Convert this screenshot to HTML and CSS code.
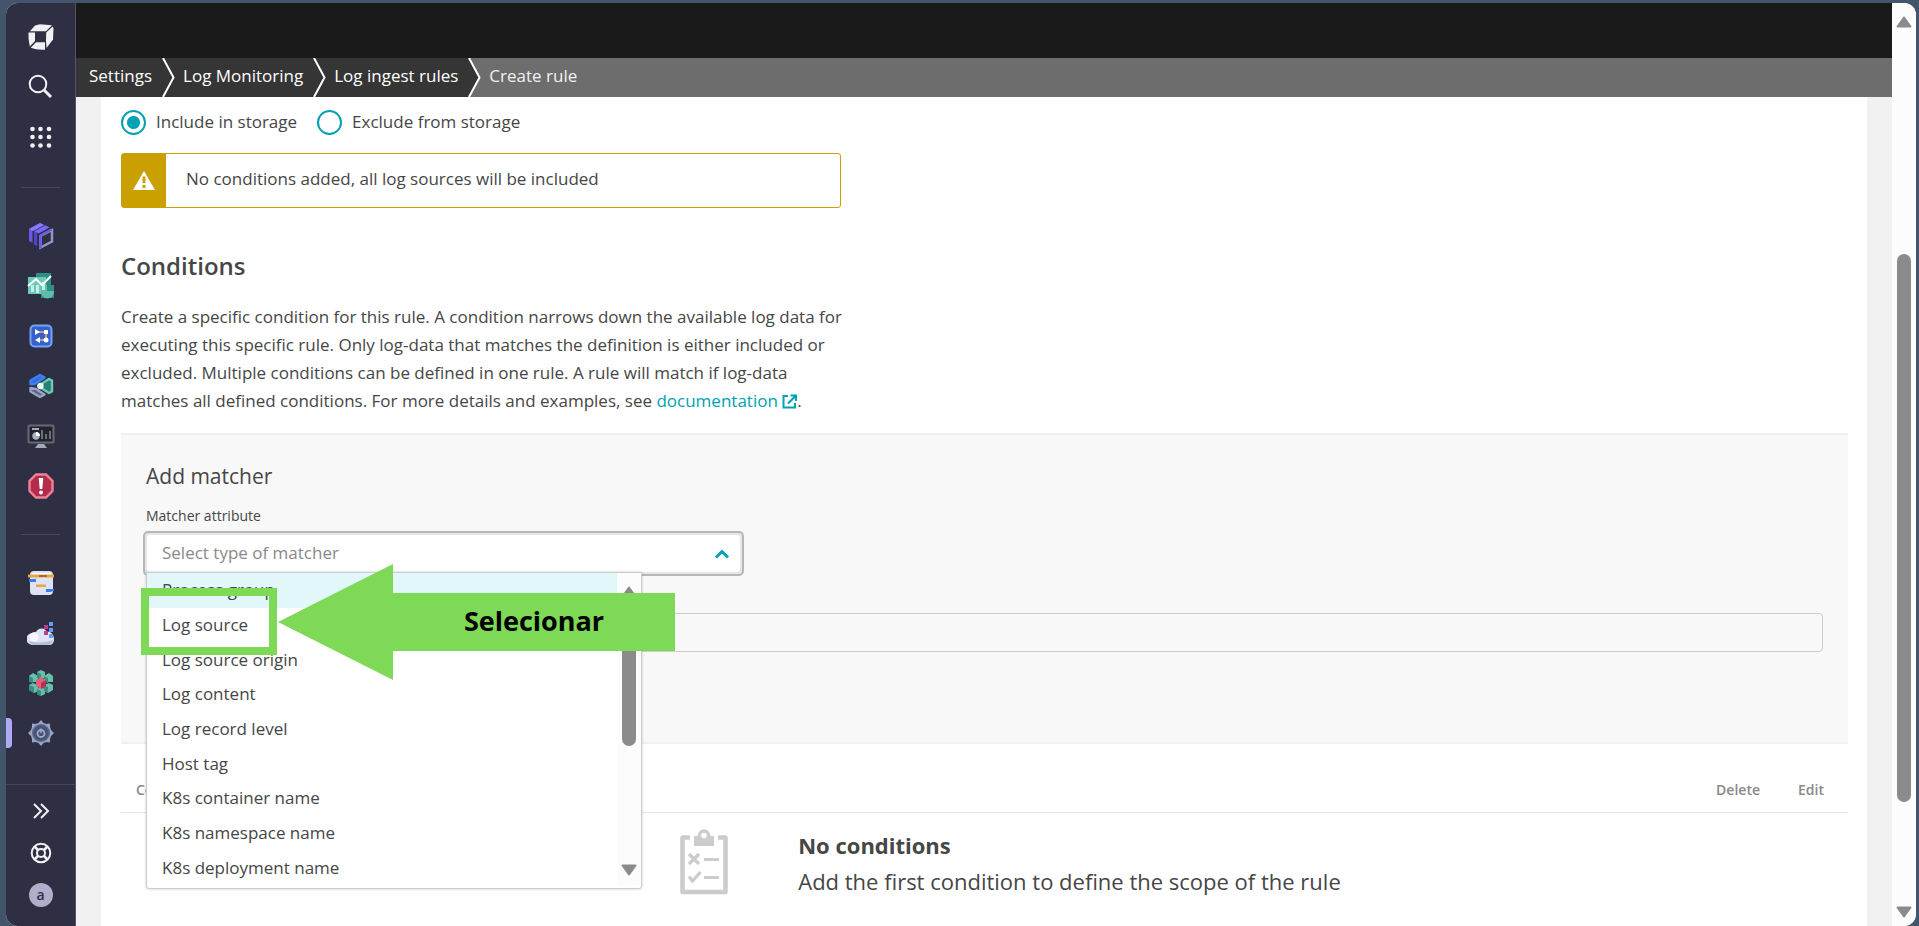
FILE: index.html
```html
<!DOCTYPE html>
<html lang="en">
<head>
<meta charset="utf-8">
<title>Create rule</title>
<link rel="stylesheet" href="styles.css">
</head>
<body>
<div class="frame">
  <nav class="sidebar" aria-label="Main">
    <div class="group group-top">
      <a href="#" class="nav" aria-label="Home"><svg width="26" height="26" viewBox="0 0 26 26" fill="#f0f0f5"><path d="M2 7.300L7 1.500 12 .2 24 1.300 18 7.300z"/><path d="M24.700 2.500l.8 2-.5 11-6.500 8.500-.5-7 .2-8.500z"/><path d="M.5 8.500H7V17l-5.200 5.500Q0 15 .5 8.500z"/><path d="M2.700 23.800L8 18.200h9v7.500Q9 26.300 2.700 23.800z"/></svg></a>
      <a href="#" class="nav" aria-label="Search"><svg width="26" height="26" viewBox="0 0 26 26" fill="none" stroke="#f0f0f5" stroke-width="2"><circle cx="10" cy="10" r="8.300"/><path d="M16 16l7 7" stroke-width="3"/></svg></a>
      <a href="#" class="nav" aria-label="Apps"><svg width="26" height="26" viewBox="0 0 26 26" fill="#f0f0f5"><circle cx="4.500" cy="5" r="2.300"/><circle cx="12.500" cy="5" r="2.300"/><circle cx="21" cy="5" r="2.300"/><circle cx="4.500" cy="13" r="2.300"/><circle cx="12.500" cy="13" r="2.300"/><circle cx="21" cy="13" r="2.300"/><circle cx="4.500" cy="21.500" r="2.300"/><circle cx="12.500" cy="21.500" r="2.300"/><circle cx="21" cy="21.500" r="2.300"/></svg></a>
    </div>
    <div class="group">
      <a href="#" class="nav" aria-label="Clouds"><svg width="26" height="28" viewBox="0 0 26 28"><path d="M1 7l11-6 4 2-11 6v12l-4-2z" fill="#6c55e6"/><path d="M6 9l11-6 4 2-11 6.500v13l-4-2z" fill="#5443c8"/><path d="M1 7l11-6 4 2-11 6z" fill="#8a78ff"/><path d="M6.500 9.500l11-6 4 2-11 6z" fill="#7b68f5"/><path d="M5 9v13M9.700 11v14" stroke="#2f2f43"/><path d="M12.500 14l11.500-6v11.500l-11.500 6z" fill="#2f2f43" stroke="#9096c0" stroke-width="2.500"/><path d="M12.500 26V13.500l11-6" fill="none" stroke="#6d5be8" stroke-width="2.500"/></svg></a>
      <a href="#" class="nav" aria-label="Dashboards"><svg width="28" height="26" viewBox="0 0 28 26"><path d="M9 0h15v12H9z" fill="#2d8f80"/><path d="M1 4h18v17H1z" fill="#6dcabb"/><path d="M14 12h13v13H14z" fill="#318e80"/><path d="M14 12h6v6h7v1a6 6 0 0 1-13 0z" fill="#60bba9"/><path d="M4 12h3v7H4zM9 12h3v8H9zM15 9h3v8h-3z" fill="#c5eee5"/><path d="M1 13l8-7 6 6 9-9" fill="none" stroke="#fff" stroke-width="2"/></svg></a>
      <a href="#" class="nav" aria-label="Workflows"><svg width="24" height="24" viewBox="0 0 24 24"><rect x="1.500" y="1.500" width="21" height="21" rx="4" fill="#3560d0" stroke="#75a4f2" stroke-width="2"/><path d="M9 8h8v8H8" fill="none" stroke="#f0b25c" stroke-width="1.500"/><path d="M6 5l5 3-5 3zM15 6h4v4h-4zM6 16l5-3v6z" fill="#fff"/><circle cx="17" cy="16" r="2.500" fill="#fff"/></svg></a>
      <a href="#" class="nav" aria-label="Services"><svg width="26" height="26" viewBox="0 0 26 26" stroke-linejoin="round" stroke-width="2.400"><path d="M2.500 15v3.500l9.500 5.500 4.500-2.500L8 16z" fill="#5d6485" stroke="#9ba3c2"/><path d="M2.500 11V7.500L12 2l4.500 2.500L6.500 11z" fill="#316fe0" stroke="#3f80ee"/><path d="M10 13l11-7 3 1.500v11L21 20z" fill="#268070" stroke="#6cc9b5"/><circle cx="12.500" cy="13" r="3.200" fill="#e5fbf5"/></svg></a>
      <a href="#" class="nav" aria-label="Classic dashboards"><svg width="28" height="26" viewBox="0 0 28 26"><rect x="1.500" y="2.500" width="25" height="17" rx="1.500" fill="#23242b" stroke="#666978" stroke-width="2"/><path d="M5 6h7" stroke="#d3d7e5" stroke-width="1.500"/><circle cx="9" cy="13" r="3.700" fill="#aab0c6"/><path d="M9 13V9a4 4 0 0 1 4 4z" fill="#fff"/><path d="M15 16V7M19 16v-5M23 16V8" stroke="#858997" stroke-width="1.500"/><path d="M11 21h6l3 4H8z" fill="#a3a8bd"/></svg></a>
      <a href="#" class="nav" aria-label="Problems"><svg width="26" height="26" viewBox="0 0 26 26"><path d="M8 1.500h10L24.500 8v10L18 24.500H8L1.500 18V8z" fill="#b32c4b" stroke="#ef8296" stroke-width="2.400"/><path d="M10.700 5h4.600l-1 11h-2.600z" fill="#fff"/><circle cx="13" cy="19.500" r="2" fill="#fff"/></svg></a>
    </div>
    <div class="group">
      <a href="#" class="nav" aria-label="Logs"><svg width="28" height="26" viewBox="0 0 28 26"><rect x="3" y="1" width="23" height="24" rx="4" fill="#dde2f5"/><path d="M5 3h19v3H5z" fill="#fff"/><path d="M1 4.500h26v3H1z" fill="#eba63c"/><path d="M12 5h8v2h-8z" fill="#a8683a"/><path d="M2 9h7v3H2zM19 19h8v2l-4 1h-4z" fill="#397bea"/><path d="M9 14.500h10v2.500H9z" fill="#eba63c"/></svg></a>
      <a href="#" class="nav" aria-label="Cloud"><svg width="28" height="26" viewBox="0 0 28 26"><path d="M6 25a6 6 0 0 1-1-12 5 5 0 0 1 4-1 6 6 0 0 1 11 0c3-1 7 2 7 7 0 4-2 6-5 6z" fill="#dfe3f3"/><path d="M6 25a5 5 0 0 1-4-4c6 2 16 2 24-1-1 3-2 5-4 5z" fill="#b9bfd6"/><circle cx="7" cy="17" r="4.500" fill="#f7f8ff"/><path d="M17 5h4v4h-4zM17 11h4v4h-4z" fill="#c13c8a"/><path d="M22 2h4v4h-4zM22 8h4v4h-4zM22 14h4v4h-4z" fill="#659df2"/></svg></a>
      <a href="#" class="nav" aria-label="Kubernetes"><svg width="26" height="28" viewBox="0 0 26 28"><g fill="#68bfae"><path d="M13 1l4 2v6H9V3zM5 4l5 3v6H1V7zM21 4l4 3v6h-9V7zM5 14l5 2v6l-4 2-5-3v-5zM21 14l4 2v5l-5 3-4-2v-6zM13 18l4 2v5l-4 2-4-2v-5z"/></g><path d="M13 5v4H9V3zM5 9v5l-4-1V7zM20 9v5l-4-1V7zM6 18v6l-5-3v-5zM20 18v6l-4-2v-6zM13 22v5l-4-2v-5z" fill="#398e80"/><path d="M13 8l5 3v6l-5 3-5-3v-6z" fill="#e25f7c"/><path d="M13 14v6l5-3v-6z" fill="#b92f51"/></svg></a>
      <a href="#" class="nav nav-active" aria-label="Settings"><svg width="28" height="28" viewBox="0 0 28 28"><path d="M14 1l2.500 3 3 1L23 4.500V8l1 3 3 3-3 3-1 3v3.500l-3.500-.5-3 1L14 27l-2.500-3-3-1-3.500.5V20l-1-3-3-3 3-3 1-3V4.500L8.500 5l3-1z" fill="#9aa4c5"/><circle cx="14" cy="14" r="9" fill="#59668b"/><circle cx="14" cy="14" r="7.500" fill="#485376"/><circle cx="14" cy="14.500" r="3.500" fill="none" stroke="#a1aac7" stroke-width="1.800"/><path d="M14 9.500V14" stroke="#a1aac7" stroke-width="1.500"/></svg></a>
    </div>
    <div class="group group-bottom">
      <button class="nav" aria-label="Expand"><svg width="18" height="18" viewBox="0 0 18 18" fill="none" stroke="#f0f0f5" stroke-width="2"><path d="M2 2l7 7-7 7M9 2l7 7-7 7"/></svg></button>
      <button class="nav" aria-label="Help"><svg width="22" height="22" viewBox="0 0 22 22" fill="none" stroke="#f0f0f5" stroke-width="2"><circle cx="11" cy="11" r="9.300"/><circle cx="11" cy="11" r="4"/><path d="M4.500 4.500L8 8M17.500 4.500L14 8M4.500 17.500L8 14M17.500 17.500L14 14" stroke-width="2.500"/></svg></button>
      <button class="nav" aria-label="Account"><span class="avatar">a</span></button>
    </div>
  </nav>

  <div class="main">
    <header class="topbar"></header>
    <nav class="crumbs" aria-label="Breadcrumb">
      <a href="#" class="crumb">Settings</a>
      <svg class="sep" viewBox="0 0 14 39"><path d="M1 0l10.500 19.500L1 39" fill="none" stroke="#fff" stroke-width="2"/></svg>
      <a href="#" class="crumb">Log Monitoring</a>
      <svg class="sep" viewBox="0 0 14 39"><path d="M1 0l10.500 19.500L1 39" fill="none" stroke="#fff" stroke-width="2"/></svg>
      <a href="#" class="crumb">Log ingest rules</a>
      <svg class="sep sep-last" viewBox="0 0 14 39"><path d="M0 0h1l10.500 19.500L1 39H0z" fill="#353535"/><path d="M1 0l10.500 19.500L1 39" fill="none" stroke="#fff" stroke-width="2"/></svg>
      <a href="#" class="crumb crumb-current" aria-current="page">Create rule</a>
    </nav>

    <main class="card">
      <div class="radios">
        <label class="radio"><input type="radio" name="mode" checked>Include in storage</label>
        <label class="radio"><input type="radio" name="mode">Exclude from storage</label>
      </div>
      <div class="alert" role="status">
        <div class="alert-icon"><svg width="22" height="19" viewBox="0 0 22 19"><path d="M11 0l11 19H0z" fill="#fff"/><path d="M11 5.500v6.500M11 14v3" stroke="#c9a000" stroke-width="3"/></svg></div>
        <p class="alert-text">No conditions added, all log sources will be included</p>
      </div>
      <h2 class="title">Conditions</h2>
      <p class="intro">Create a specific condition for this rule. A condition narrows down the available log data for<br>executing this specific rule. Only log-data that matches the definition is either included or<br>excluded. Multiple conditions can be defined in one rule. A rule will match if log-data<br>matches all defined conditions. For more details and examples, see <a href="#" class="link">documentation <svg width="15" height="15" viewBox="0 0 15 15" fill="none" stroke="#00a1b2" stroke-width="2"><path d="M6 2H1.500v11.500H13V9M8.500 1.500H14V7M13.500 2L6 9.500"/></svg></a>.</p>

      <section class="matcher">
        <h3 class="subtitle">Add matcher</h3>
        <label class="label" for="attribute">Matcher attribute</label>
        <div class="field">
          <select id="attribute" class="select"><option>Select type of matcher</option></select>
          <svg class="chevron" width="16" height="10" viewBox="0 0 16 10" fill="none" stroke="#00a1b2" stroke-width="3"><path d="M2 8.500l6-6 6 6"/></svg>
          <div class="menu">
            <ul class="options" role="listbox" aria-label="Matcher attribute">
              <li class="option option-hover" role="option">Process group</li>
              <li class="option" role="option">Log source</li>
              <li class="option" role="option">Log source origin</li>
              <li class="option" role="option">Log content</li>
              <li class="option" role="option">Log record level</li>
              <li class="option" role="option">Host tag</li>
              <li class="option" role="option">K8s container name</li>
              <li class="option" role="option">K8s namespace name</li>
              <li class="option" role="option">K8s deployment name</li>
            </ul>
            <div class="menu-scroll">
              <svg width="16" height="12" viewBox="0 0 16 12"><path d="M8 1.500L14.500 10.500h-13z" fill="#8b8b8b" stroke="#8b8b8b" stroke-width="2" stroke-linejoin="round"/></svg>
              <div class="menu-thumb"></div>
              <svg width="16" height="12" viewBox="0 0 16 12"><path d="M8 10.500L14.500 1.500h-13z" fill="#8b8b8b" stroke="#8b8b8b" stroke-width="2" stroke-linejoin="round"/></svg>
            </div>
          </div>
          <div class="highlight"></div>
          <div class="arrow"><div class="arrow-head"></div><div class="arrow-body">Selecionar</div></div>
        </div>
        <input class="value" type="text" aria-label="Value" disabled>
      </section>

      <table class="table">
        <thead><tr><th class="col-main">Condition</th><th>Delete</th><th>Edit</th></tr></thead>
        <tbody><tr><td colspan="3">
          <div class="empty">
            <svg width="48" height="67" viewBox="0 0 48 67"><path d="M10 8.500H2.500V63h43V8.500H38" fill="none" stroke="#ccc" stroke-width="4.500" stroke-linejoin="round"/><path d="M14 7h20v10H14z" fill="#ccc"/><circle cx="24" cy="6.500" r="4.500" fill="#fff" stroke="#ccc" stroke-width="3.500"/><path d="M9 25l10 10M19 25L9 35M24 30.500h15M24 48.500h15M9 47.500l3.500 4.500 8-9" fill="none" stroke="#ccc" stroke-width="3.200"/></svg>
            <div class="empty-body"><h3 class="empty-title">No conditions</h3><p class="empty-text">Add the first condition to define the scope of the rule</p></div>
          </div>
        </td></tr></tbody>
      </table>
    </main>
  </div>
  <div class="page-scroll">
    <svg width="16" height="12" viewBox="0 0 16 12"><path d="M8 1.500L14.500 10.500h-13z" fill="#8b8b8b" stroke="#8b8b8b" stroke-width="2" stroke-linejoin="round"/></svg>
    <div class="page-track"><div class="page-thumb"></div></div>
    <svg width="16" height="12" viewBox="0 0 16 12"><path d="M8 10.500L14.500 1.500h-13z" fill="#8b8b8b" stroke="#8b8b8b" stroke-width="2" stroke-linejoin="round"/></svg>
  </div>
</div>
</body>
</html>
```
FILE: styles.css
```css
* { box-sizing: border-box; }
body { margin: 0; background: #43556b; color: #454646; font: 17px/28px "Open Sans", "Noto Sans", sans-serif; }
h2, h3, p, ul { margin: 0; padding: 0; }
a { text-decoration: none; color: inherit; }
button { border: 0; background: none; padding: 0; font: inherit; }
svg { flex: none; }

.frame { display: flex; height: calc(100vh - 3px); margin: 3px 3px 0 6px; border-radius: 12px; overflow: hidden; background: #f1f1f1; }

.sidebar { flex: none; width: 70px; display: flex; flex-direction: column; background: #2f2f43; border-right: 1px solid #55556a; }
.group { display: flex; flex-direction: column; align-items: stretch; padding: 24px 0 23px; position: relative; }
.group + .group::before { content: ""; position: absolute; top: 0; left: 15px; right: 15px; height: 1px; background: #48485c; }
.group-top { padding: 9px 0 25px; }
.nav { height: 50px; display: flex; align-items: center; justify-content: center; position: relative; color: #2f2f43; }
.nav-active::before { content: ""; position: absolute; left: 0; top: 10px; width: 6px; height: 30px; border-radius: 0 4px 4px 0; background: #aea9f5; }
.group-bottom { margin-top: auto; padding: 6px 0 10px; }
.group-bottom.group-bottom::before { left: 0; right: 0; }
.group-bottom .nav { height: 42px; }
.avatar { width: 24px; height: 24px; border-radius: 50%; background: #b0aecb; font-size: 14px; line-height: 23px; font-weight: 600; text-align: center; }

.main { flex: 1; min-width: 0; display: flex; flex-direction: column; overflow: hidden; }
.topbar { flex: none; height: 55px; background: #1a1a1a; }
.crumbs { flex: none; height: 39px; display: flex; align-items: stretch; background: #353535; color: #fff; line-height: 36px; }
.crumb { padding: 0 10px 0 7px; }
.crumb:first-child { padding-left: 13px; }
.crumb-current { flex: 1; background: #6d6d6d; color: #f1f1f1; }
.sep { width: 14px; height: 39px; }
.sep-last { background: #6d6d6d; }

.card { flex: 1; margin: 0 25px; padding: 12px 19px 0 20px; background: #fff; }
.radios { display: flex; gap: 20px; height: 44px; }
.radio { display: flex; align-items: flex-start; gap: 10px; line-height: 26px; }
.radio input { appearance: none; width: 25px; height: 25px; margin: 1px 0 0; border: 2px solid #00a1b2; border-radius: 50%; background: #fff; }
.radio input:checked { background: radial-gradient(circle, #00a1b2 6px, #fff 7px); }
.alert { display: flex; width: 720px; max-width: 100%; height: 55px; border: 1px solid #c9a000; border-radius: 3px; }
.alert-icon { width: 44px; display: flex; align-items: center; justify-content: center; background: #c9a000; }
.alert-text { padding: 11px 20px; }
.title { margin-top: 42px; font-size: 24px; line-height: 32px; font-weight: 600; }
.intro { margin-top: 21px; margin-bottom: 18px; }
.link { color: #00a1b2; }
.link svg { vertical-align: -2px; }

.matcher { height: 311px; padding: 25px 25px 0; border: solid #f0f0f0; border-width: 2px 0; background: #f8f8f8; }
.subtitle { font-size: 21px; line-height: 32px; font-weight: 400; }
.label { display: block; margin-top: 14px; font-size: 14px; line-height: 20px; }
.field { position: relative; width: 601px; height: 45px; margin: 5px 0 0 -3px; padding: 2px; border: 2px solid #b7b7b7; border-radius: 5px; background: #e6e6e6; }
.select { appearance: none; width: 100%; height: 37px; padding: 0 15px 2px; border: 0; border-radius: 3px; background: #fff; color: #898989; font: inherit; opacity: 1; }
.chevron { position: absolute; right: 12px; top: 16px; }
.menu { position: absolute; z-index: 1; left: 1px; top: 39px; width: 496px; height: 317px; display: flex; background: #fff; border: 1px solid #ccc; border-radius: 0 0 3px 3px; box-shadow: 0 0 3px #0003; padding-bottom: 3px; }
.options { flex: 1; list-style: none; display: flex; flex-direction: column; }
.option { flex: 1; display: flex; align-items: center; padding: 0 15px; }
.option-hover { background: #e1f7fa; }
.menu-scroll { width: 24px; display: flex; flex-direction: column; align-items: center; justify-content: space-between; padding: 13px 0 9px; background: #fcfcfc; }
.menu-thumb { flex: none; width: 14px; height: 140px; margin-bottom: 110px; border-radius: 7px; background: #8b8b8b; }
.highlight { position: absolute; z-index: 2; left: -4px; top: 55px; width: 136px; height: 67px; border: 8px solid #7ed957; }
.arrow { position: absolute; z-index: 2; left: 133px; top: 31px; width: 397px; height: 116px; display: flex; align-items: center; }
.arrow-head { width: 115px; height: 116px; background: #7ed957; clip-path: polygon(0 50%, 100% 0, 100% 100%); }
.arrow-body { flex: 1; height: 58px; background: #7ed957; color: #000; font: 700 27px/56px "Open Sans", sans-serif; text-align: center; }
.value { display: block; width: 100%; height: 39px; margin-top: 37px; border: 1px solid #ccc; border-radius: 4px; background: #f8f8f8; }

.table { width: 100%; border-collapse: collapse; }
.table th { padding: 32px 0 8px 38px; text-align: left; font-size: 14px; font-weight: 600; color: #898989; white-space: nowrap; border-bottom: 1px solid #e6e6e6; }
.table th:last-child { padding-right: 24px; }
.table .col-main { width: 100%; padding-left: 15px; }
.table td { padding: 0; }
.empty { display: flex; justify-content: center; gap: 70px; padding: 16px 0 0 52px; }
.empty-title { font-size: 22px; line-height: 32px; font-weight: 700; }
.empty-text { margin-top: 4px; font-size: 22px; line-height: 32px; }

.page-scroll { flex: none; width: 24px; display: flex; flex-direction: column; align-items: center; padding: 13px 0 8px; background: #fcfcfc; }
.page-track { flex: 1; padding: 226px 0 104px; }
.page-thumb { width: 14px; height: 100%; border-radius: 7px; background: #8b8b8b; }
```
